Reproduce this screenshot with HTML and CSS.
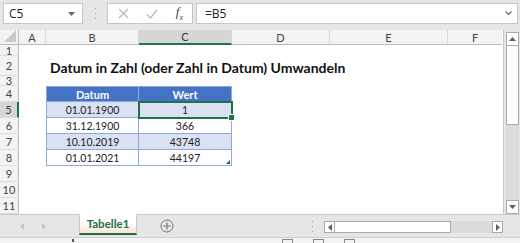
FILE: index.html
```html
<!DOCTYPE html>
<html lang="de">
<head>
  <meta charset="UTF-8">
  <title>Datum in Zahl umwandeln</title>
  <link rel="stylesheet" href="styles.css">
</head>
<body>
  <div id="app">

    <div id="formulaBar">
      <div class="nameBox">
        <span>C5</span>
        <svg class="caret" width="7" height="4" viewBox="0 0 7 4"><path d="M0 0h7L3.5 4z" fill="#666"/></svg>
      </div>
      <div class="grip">
        <svg width="3" height="11" viewBox="0 0 3 11"><g fill="#a0a0a0"><rect x="1" y="0" width="1" height="1"/><rect x="1" y="5" width="1" height="1"/><rect x="1" y="10" width="1" height="1"/></g></svg>
      </div>
      <div class="fnBox">
        <svg class="fnIcon" width="11" height="11" viewBox="0 0 11 11"><path d="M1 1l9 9M10 1l-9 9" stroke="#b8b8b8" stroke-width="1.2"/></svg>
        <svg class="fnIcon" width="12" height="10" viewBox="0 0 12 10"><path d="M1 5.5l3.5 3.5L11 1" stroke="#b8b8b8" stroke-width="1.2" fill="none"/></svg>
        <span class="fx">f<sub>x</sub></span>
      </div>
      <div class="formula">
        <span>=B5</span>
        <svg class="chev" width="7" height="5" viewBox="0 0 7 5"><path d="M0.5 0.5l3 3 3-3" stroke="#666" stroke-width="1.1" fill="none"/></svg>
      </div>
    </div>

    <div id="sheetArea">
      <div id="sheet">
        <div class="corner"><svg width="12" height="12" viewBox="0 0 12 12"><path d="M12 0v12H0z" fill="#c8c8c8"/></svg></div>
        <div class="colHead">A</div>
        <div class="colHead">B</div>
        <div class="colHead active">C</div>
        <div class="colHead">D</div>
        <div class="colHead">E</div>
        <div class="colHead last">F</div>

        <div class="rowHead r1">1</div>
        <div class="rowHead r2">2</div>
        <div class="rowHead r3">3</div>
        <div class="rowHead r4">4</div>
        <div class="rowHead r5 active">5</div>
        <div class="rowHead r6">6</div>
        <div class="rowHead r7">7</div>
        <div class="rowHead r8">8</div>
        <div class="rowHead r9">9</div>
        <div class="rowHead r10">10</div>
        <div class="rowHead r11">11</div>

        <div class="title">Datum in Zahl (oder Zahl in Datum) Umwandeln</div>

        <div class="cell head colB r4">Datum</div>
        <div class="cell head colC r4">Wert</div>
        <div class="cell band colB r5">01.01.1900</div>
        <div class="cell band colC r5 selected">1</div>
        <div class="cell colB r6">31.12.1900</div>
        <div class="cell colC r6">366</div>
        <div class="cell band colB r7">10.10.2019</div>
        <div class="cell band colC r7">43748</div>
        <div class="cell colB r8">01.01.2021</div>
        <div class="cell colC r8 tableEnd">44197</div>
      </div>

      <div id="vscroll">
        <div class="arrowBox"><svg width="7" height="4" viewBox="0 0 7 4"><path d="M0 4h7L3.5 0z" fill="#606060"/></svg></div>
        <div class="thumb"></div>
        <div class="track"></div>
        <div class="arrowBox"><svg width="7" height="4" viewBox="0 0 7 4"><path d="M0 0h7L3.5 4z" fill="#606060"/></svg></div>
      </div>
    </div>

    <div id="tabBar">
      <div class="nav">
        <svg width="4" height="7" viewBox="0 0 4 7"><path d="M4 0v7L0 3.5z" fill="#c4c4c4"/></svg>
        <svg width="4" height="7" viewBox="0 0 4 7"><path d="M0 0v7l4-3.5z" fill="#c4c4c4"/></svg>
      </div>
      <div class="tab"><span>Tabelle1</span></div>
      <div class="addSheet">
        <svg width="14" height="14" viewBox="0 0 14 14"><circle cx="7" cy="7" r="6" stroke="#777" stroke-width="1" fill="none"/><path d="M7 3.5v7M3.5 7h7" stroke="#777" stroke-width="1.2"/></svg>
      </div>
      <div class="spacer"></div>
      <div class="grip">
        <svg width="3" height="11" viewBox="0 0 3 11"><g fill="#a8a8a8"><rect x="1" y="0" width="1" height="1"/><rect x="1" y="5" width="1" height="1"/><rect x="1" y="10" width="1" height="1"/></g></svg>
      </div>
      <div id="hscroll">
        <div class="arrowBox"><svg width="4" height="7" viewBox="0 0 4 7"><path d="M4 0v7L0 3.5z" fill="#606060"/></svg></div>
        <div class="thumb"></div>
        <div class="track"></div>
        <div class="arrowBox"><svg width="4" height="7" viewBox="0 0 4 7"><path d="M0 0v7l4-3.5z" fill="#606060"/></svg></div>
      </div>
    </div>

    <div id="statusBar">
      <span class="mark left"></span>
      <span class="viewBtn"></span>
      <span class="viewBtn"></span>
      <span class="viewBtn"></span>
    </div>

  </div>
</body>
</html>
```

FILE: styles.css
```css
body {
  margin: 0;
  padding: 0;
  background: #e6e6e6;
  font-family: 'Open Sans', 'Noto Sans', sans-serif;
  color: #333;
  overflow: hidden;
}

#app {
  width: 520px;
  height: 243px;
  display: flex;
  flex-direction: column;
}

/* formula bar */
#formulaBar {
  height: 31px;
  box-sizing: border-box;
  padding: 3px 2px 0 3px;
  display: flex;
  align-items: flex-start;
}

.nameBox, .fnBox, .formula {
  height: 21px;
  box-sizing: border-box;
  background: #fff;
  border: 1px solid #c6c6c6;
  display: flex;
  align-items: center;
}

.nameBox {
  width: 80px;
  padding: 0 7px 0 5px;
  justify-content: space-between;
  font-size: 12px;
  color: #222;
}

.grip {
  width: 24px;
  display: flex;
  justify-content: center;
  align-items: center;
  height: 21px;
}

.fnBox {
  width: 86px;
  padding: 0 9px 0 10px;
  justify-content: space-between;
}

.fx {
  font-family: 'Liberation Serif', serif;
  font-style: italic;
  font-size: 13px;
  color: #444;
  line-height: 1;
}

.fx sub {
  font-size: 8px;
}

.formula {
  flex: 1;
  margin-left: 3px;
  padding: 0 5px 0 8px;
  justify-content: space-between;
  font-size: 12px;
  color: #222;
}

/* sheet */
#sheetArea {
  height: 184px;
  display: flex;
}

#sheet {
  width: 503px;
  background: #fff;
  border-right: 1px solid #c8c8c8;
  display: grid;
  grid-template-columns: 19px 27px 93px 93px 98px 118px 54px;
  grid-template-rows: 15px 11px 20px 10px repeat(8, 16px);
  font-family: 'Lato', 'Liberation Sans', sans-serif;
}

.corner {
  background: #f3f3f3;
  border-bottom: 1px solid #bdbdbd;
  border-right: 1px solid #bdbdbd;
  display: flex;
  align-items: flex-end;
  justify-content: flex-end;
  padding: 0 2px 2px 0;
}

.colHead {
  background: #f3f3f3;
  border-bottom: 1px solid #bdbdbd;
  border-right: 1px solid #d8d8d8;
  font-size: 11px;
  color: #444;
  display: flex;
  align-items: center;
  justify-content: center;
}

.colHead.last {
  border-right: none;
}

.colHead.active {
  background: #d6d6d6;
  border-bottom: 2px solid #217346;
  color: #333;
}

.rowHead {
  grid-column: 1;
  background: #f3f3f3;
  border-right: 1px solid #bdbdbd;
  border-bottom: 1px solid #dcdcdc;
  font-size: 11px;
  color: #444;
  display: flex;
  align-items: center;
  justify-content: center;
}

.rowHead.active {
  background: #d6d6d6;
  border-right: 2px solid #217346;
}

.r1 { grid-row: 2; }
.r2 { grid-row: 3; }
.r3 { grid-row: 4; }
.r4 { grid-row: 5; }
.r5 { grid-row: 6; }
.r6 { grid-row: 7; }
.r7 { grid-row: 8; }
.r8 { grid-row: 9; }
.r9 { grid-row: 10; }
.r10 { grid-row: 11; }
.r11 { grid-row: 12; }

.title {
  grid-row: 3;
  grid-column: 3 / span 4;
  font-weight: bold;
  font-size: 14px;
  color: #111;
  white-space: nowrap;
  padding: 3px 0 0 4px;
  display: flex;
  align-items: center;
}

.colB { grid-column: 3; }
.colC { grid-column: 4; }

.cell {
  font-size: 10.5px;
  color: #222;
  display: flex;
  align-items: center;
  justify-content: center;
  border-right: 1px solid #8ea9db;
  border-bottom: 1px solid #8ea9db;
  box-sizing: border-box;
}

.cell.colB {
  border-left: 1px solid #8ea9db;
}

.cell.head {
  background: #4472c4;
  color: #fff;
  font-weight: bold;
  font-size: 11px;
  border-top: 1px solid #8ea9db;
}

.cell.band {
  background: #d9e1f2;
}

.cell.selected {
  position: relative;
  outline: 2px solid #217346;
  outline-offset: -1px;
  z-index: 1;
}

.cell.selected::after {
  content: '';
  position: absolute;
  right: -4px;
  bottom: -4px;
  width: 5px;
  height: 5px;
  background: #217346;
  border: 1px solid #fff;
}

.cell.tableEnd {
  position: relative;
}

.cell.tableEnd::after {
  content: '';
  position: absolute;
  right: 1px;
  bottom: 1px;
  border-style: solid;
  border-width: 0 0 4px 4px;
  border-color: transparent transparent #2f5597 transparent;
}

/* vertical scrollbar */
#vscroll {
  width: 13px;
  margin: 2px 0 0 2px;
  display: flex;
  flex-direction: column;
}

#vscroll .arrowBox {
  height: 12px;
  background: #fff;
  border: 1px solid #aaa;
  display: flex;
  align-items: center;
  justify-content: center;
}

#vscroll .thumb {
  height: 78px;
  background: #fff;
  border: 1px solid #aaa;
  border-top: none;
}

#vscroll .track {
  flex: 1;
  background: #dcdcdc;
}

/* sheet tabs */
#tabBar {
  height: 23px;
  display: flex;
  align-items: flex-start;
  border-top: 1px solid #c8c8c8;
  box-sizing: border-box;
}

#tabBar .nav {
  width: 79px;
  height: 22px;
  display: flex;
  align-items: center;
  gap: 18px;
  padding-left: 20px;
  box-sizing: border-box;
}

.tab {
  width: 58px;
  height: 21px;
  margin-top: -1px;
  box-sizing: border-box;
  background: linear-gradient(#ffffff 45%, #fbe2d6);
  border-left: 1px solid #c8c8c8;
  border-right: 1px solid #c8c8c8;
  border-bottom: 2px solid #217346;
  display: flex;
  align-items: center;
  justify-content: center;
  font-family: 'Lato', 'Liberation Sans', sans-serif;
  font-weight: bold;
  font-size: 11.5px;
  color: #217346;
}

.addSheet {
  width: 60px;
  height: 22px;
  display: flex;
  align-items: center;
  justify-content: center;
}

.spacer {
  flex: 1;
}

#tabBar .grip {
  width: 24px;
  height: 22px;
}

#hscroll {
  width: 179px;
  height: 12px;
  margin: 6px 17px 0 0;
  display: flex;
}

#hscroll .arrowBox {
  width: 11px;
  background: #fff;
  border: 1px solid #aaa;
  box-sizing: border-box;
  display: flex;
  align-items: center;
  justify-content: center;
}

#hscroll .thumb {
  width: 116px;
  background: #fff;
  border: 1px solid #aaa;
  border-left: none;
  box-sizing: border-box;
}

#hscroll .track {
  flex: 1;
  background: #dcdcdc;
}

/* status bar */
#statusBar {
  height: 5px;
  background: #f3f3f3;
  border-top: 1px solid #d0d0d0;
  position: relative;
  overflow: hidden;
}

.mark {
  position: absolute;
  left: 72px;
  top: 1px;
  width: 2px;
  height: 3px;
  background: #555;
}

.viewBtn {
  position: absolute;
  top: 1px;
  width: 11px;
  height: 8px;
  border: 1px solid #888;
  box-sizing: border-box;
}

.viewBtn:nth-child(2) { left: 282px; }
.viewBtn:nth-child(3) { left: 313px; }
.viewBtn:nth-child(4) { left: 344px; }
```
